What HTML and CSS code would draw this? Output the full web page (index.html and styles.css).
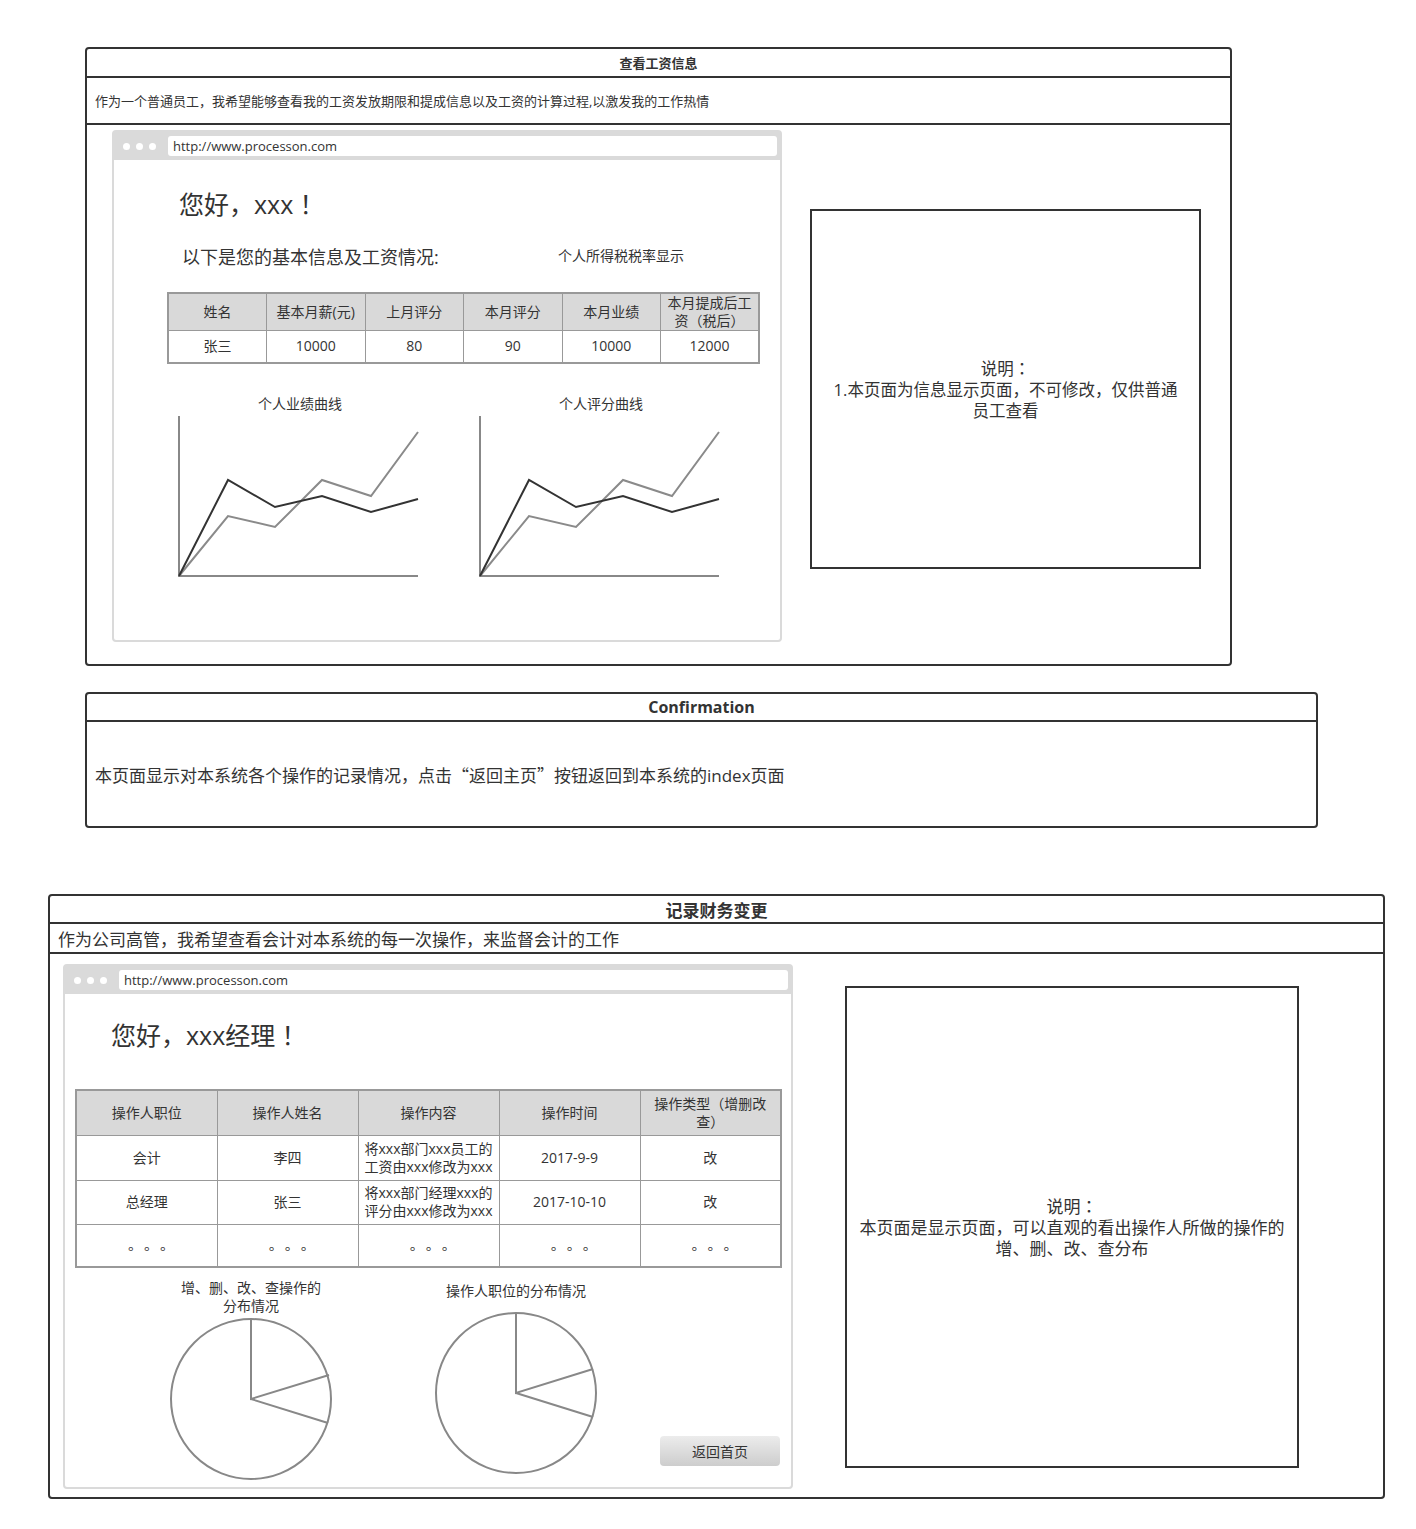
FILE: index.html
```html
<!DOCTYPE html>
<html lang="zh-CN">
<head>
<meta charset="utf-8">
<title>查看工资信息</title>
<link rel="stylesheet" href="styles.css">
</head>
<body>
<section class="panel p1">
  <div class="ptitle">查看工资信息</div>
  <div class="pdesc">作为一个普通员工，我希望能够查看我的工资发放期限和提成信息以及工资的计算过程,以激发我的工作热情</div>
  <div class="pbody">
    <div class="browser b1">
      <div class="bbar">
        <div class="dots"><i></i><i></i><i></i></div>
        <div class="url">http://www.processon.com</div>
      </div>
      <div class="greet g1">您好，xxx<span class="tc" lang="zh-TW">！</span></div>
      <div class="subrow">
        <span class="subtitle">以下是您的基本信息及工资情况:</span>
        <span class="taxnote">个人所得税税率显示</span>
      </div>
      <table class="tbl t1">
        <tr class="hrow">
          <th>姓名</th><th>基本月薪(元)</th><th>上月评分</th><th>本月评分</th><th>本月业绩</th><th>本月提成后工<br>资<span class="tc" lang="zh-TW">（</span>税后<span class="tc" lang="zh-TW">）</span></th>
        </tr>
        <tr class="drow">
          <td>张三</td><td>10000</td><td>80</td><td>90</td><td>10000</td><td>12000</td>
        </tr>
      </table>
      <div class="charts">
        <div class="chart">
          <div class="ctitle">个人业绩曲线</div>
          <svg width="260" height="166" viewBox="0 0 260 166">
            <path d="M9 2V162H248" fill="none" stroke="#888" stroke-width="2"/>
            <polyline points="9,162 58,102 105,113 152,66 201,82 248,18" fill="none" stroke="#8a8a8a" stroke-width="2"/>
            <polyline points="9,162 58,66 105,93 152,82 201,98 248,85" fill="none" stroke="#333" stroke-width="2"/>
          </svg>
        </div>
        <div class="chart c2">
          <div class="ctitle">个人评分曲线</div>
          <svg width="260" height="166" viewBox="0 0 260 166">
            <path d="M9 2V162H248" fill="none" stroke="#888" stroke-width="2"/>
            <polyline points="9,162 58,102 105,113 152,66 201,82 248,18" fill="none" stroke="#8a8a8a" stroke-width="2"/>
            <polyline points="9,162 58,66 105,93 152,82 201,98 248,85" fill="none" stroke="#333" stroke-width="2"/>
          </svg>
        </div>
      </div>
    </div>
    <div class="note n1"><div class="ntext">说明<span class="tc" lang="zh-TW">：</span><br>1.本页面为信息显示页面，不可修改，仅供普通<br>员工查看</div></div>
  </div>
</section>

<section class="panel p2">
  <div class="ptitle">Confirmation</div>
  <div class="cbody"><span>本页面显示对本系统各个操作的记录情况，点击<span class="q">“</span>返回主页<span class="q">”</span>按钮返回到本系统的index页面</span></div>
</section>

<section class="panel p3">
  <div class="ptitle">记录财务变更</div>
  <div class="pdesc">作为公司高管，我希望查看会计对本系统的每一次操作，来监督会计的工作</div>
  <div class="pbody">
    <div class="browser b2">
      <div class="bbar">
        <div class="dots"><i></i><i></i><i></i></div>
        <div class="url">http://www.processon.com</div>
      </div>
      <div class="greet g2">您好，xxx经理<span class="tc" lang="zh-TW">！</span></div>
      <table class="tbl t2">
        <tr class="r1">
          <th>操作人职位</th><th>操作人姓名</th><th>操作内容</th><th>操作时间</th><th>操作类型<span class="tc" lang="zh-TW">（</span>增删改<br>查<span class="tc" lang="zh-TW">）</span></th>
        </tr>
        <tr class="r2">
          <td>会计</td><td>李四</td><td>将xxx部门xxx员工的<br>工资由xxx修改为xxx</td><td>2017-9-9</td><td>改</td>
        </tr>
        <tr class="r3">
          <td>总经理</td><td>张三</td><td>将xxx部门经理xxx的<br>评分由xxx修改为xxx</td><td>2017-10-10</td><td>改</td>
        </tr>
        <tr class="r4">
          <td class="more" lang="zh-TW">。。。</td><td class="more" lang="zh-TW">。。。</td><td class="more" lang="zh-TW">。。。</td><td class="more" lang="zh-TW">。。。</td><td class="more" lang="zh-TW">。。。</td>
        </tr>
      </table>
      <div class="pies">
        <div class="pie p-a">
          <div class="ptl">增、删、改、查操作的<br>分布情况</div>
          <svg width="170" height="170" viewBox="0 0 170 170">
            <circle cx="85" cy="85" r="80" fill="#fff" stroke="#888" stroke-width="2"/>
            <polyline points="85,5 85,85 163,61" fill="none" stroke="#888" stroke-width="2"/>
            <line x1="85" y1="85" x2="162" y2="109" stroke="#888" stroke-width="2"/>
          </svg>
        </div>
        <div class="pie p-b">
          <div class="ptl">操作人职位的分布情况</div>
          <svg width="170" height="170" viewBox="0 0 170 170">
            <circle cx="85" cy="85" r="80" fill="#fff" stroke="#888" stroke-width="2"/>
            <polyline points="85,5 85,85 162,61" fill="none" stroke="#888" stroke-width="2"/>
            <line x1="85" y1="85" x2="162" y2="109" stroke="#888" stroke-width="2"/>
          </svg>
        </div>
        <button class="btn">返回首页</button>
      </div>
    </div>
    <div class="note n2"><div class="ntext">说明<span class="tc" lang="zh-TW">：</span><br>本页面是显示页面，可以直观的看出操作人所做的操作的<br>增、删、改、查分布</div></div>
  </div>
</section>
</body>
</html>
```

FILE: styles.css
```css
* { box-sizing: border-box; }
html, body { margin: 0; padding: 0; }
body {
  width: 1416px;
  height: 1529px;
  background: #fff;
  color: #333;
  font-family: "Open Sans", "Noto Sans CJK SC", sans-serif;
  overflow: hidden;
}

.tc { font-family: "Noto Sans CJK TC", sans-serif; line-height: 1; }

.panel {
  border: 2px solid #333;
  border-radius: 4px;
  display: flex;
  flex-direction: column;
  background: #fff;
}
.ptitle {
  border-bottom: 2px solid #333;
  display: flex;
  align-items: center;
  justify-content: center;
  font-weight: bold;
  flex: none;
}
.pdesc {
  border-bottom: 2px solid #333;
  display: flex;
  align-items: center;
  padding-left: 8px;
  flex: none;
  white-space: nowrap;
}
.pbody {
  display: flex;
  align-items: flex-start;
  flex: 1;
}

/* panel 1 */
.p1 { margin: 47px 0 0 85px; width: 1147px; height: 619px; }
.p1 .ptitle { height: 29px; font-size: 13px; }
.p1 .pdesc { height: 47px; font-size: 13px; }

/* browser mock */
.browser {
  border: 2px solid #dadada;
  border-radius: 4px;
  display: flex;
  flex-direction: column;
  background: #fff;
  flex: none;
}
.bbar {
  background: #dadada;
  height: 28px;
  display: flex;
  align-items: flex-start;
  padding: 4px 3px 0 0;
  flex: none;
}
.dots {
  width: 54px;
  height: 20px;
  display: flex;
  align-items: center;
  gap: 6px;
  padding-left: 9px;
}
.dots i {
  display: block;
  width: 7px;
  height: 7px;
  border-radius: 50%;
  background: #fff;
}
.url {
  flex: 1;
  height: 20px;
  background: #fff;
  border-radius: 3px;
  font-size: 13px;
  line-height: 20px;
  padding-left: 5px;
  white-space: nowrap;
}
.b1 { margin: 5px 0 0 25px; width: 670px; height: 512px; }
.b2 { margin: 10px 0 0 13px; width: 730px; height: 525px; }

.greet { font-size: 25px; line-height: 30px; height: 30px; white-space: nowrap; }
.g1 { margin: 29px 0 0 65px; }
.g2 { margin: 26px 0 0 46px; }

.subrow {
  display: flex;
  align-items: center;
  margin: 26px 0 0 68px;
  height: 24px;
  white-space: nowrap;
}
.subtitle { font-size: 18px; width: 376px; line-height: 24px; }
.taxnote { font-size: 14px; line-height: 20px; margin-top: -2px; }

/* tables */
.tbl {
  border-collapse: collapse;
  table-layout: fixed;
  border: 2px solid #999;
  font-size: 14px;
  text-align: center;
  color: #333;
}
.tbl th, .tbl td {
  border: 1px solid #999;
  padding: 0;
  font-weight: normal;
  line-height: 18px;
  white-space: nowrap;
}
.tbl th { background: #d9d9d9; }
.t1 { margin: 23px 0 0 53px; width: 593px; }
.t1 .hrow th { height: 35px; }
.t1 .drow td { height: 32px; }
.t2 { margin: 39px 0 0 10px; width: 707px; }
.t2 .r1 th { height: 45px; }
.t2 .r2 td { height: 45px; }
.t2 .r3 td { height: 44px; }
.t2 .r4 td { height: 43px; }
.tbl td.more {
  font-family: "Noto Sans CJK TC", sans-serif;
  font-size: 14px;
  letter-spacing: 2px;
  padding: 6px 0 0 2px;
}

/* line charts */
.charts {
  display: flex;
  gap: 41px;
  margin: 30px 0 0 56px;
}
.chart { width: 260px; }
.chart svg { display: block; }
.ctitle {
  font-size: 14px;
  line-height: 20px;
  text-align: center;
}

/* notes */
.note {
  border: 2px solid #333;
  display: flex;
  align-items: center;
  justify-content: center;
  flex: none;
}
.ntext {
  text-align: center;
  line-height: 21px;
  white-space: nowrap;
}
.n1 { margin: 84px 0 0 28px; width: 391px; height: 360px; font-size: 16.5px; }
.n2 { margin: 32px 0 0 52px; width: 454px; height: 482px; font-size: 17px; }

/* panel 2 */
.p2 { margin: 26px 0 0 85px; width: 1233px; height: 136px; }
.p2 .ptitle { height: 28px; font-size: 16px; }
.cbody {
  flex: 1;
  display: flex;
  align-items: center;
  padding-left: 8px;
  font-size: 17px;
  white-space: nowrap;
}
.q { font-family: "Noto Sans CJK SC", sans-serif; }

/* panel 3 */
.p3 { margin: 66px 0 0 48px; width: 1337px; height: 605px; }
.p3 .ptitle { height: 28px; font-size: 17px; }
.p3 .pdesc { height: 30px; font-size: 17px; }

/* pies */
.pies {
  display: flex;
  align-items: flex-start;
  margin: 11px 0 0 101px;
}
.pie { width: 170px; flex: none; }
.pie svg { display: block; }
.ptl {
  font-size: 14px;
  line-height: 18px;
  text-align: center;
  white-space: nowrap;
}
.p-a svg { margin-top: -1px; }
.p-b { margin-left: 95px; }
.p-b .ptl { margin-top: 3px; }
.p-b svg { margin-top: 8px; }

.btn {
  align-self: flex-end;
  margin: 0 11px 18px auto;
  width: 120px;
  height: 30px;
  border: none;
  border-radius: 4px;
  background: linear-gradient(#ececec, #cdcdcd);
  font-family: "Open Sans", "Noto Sans CJK SC", sans-serif;
  font-size: 14px;
  color: #333;
  padding: 0;
}
```
